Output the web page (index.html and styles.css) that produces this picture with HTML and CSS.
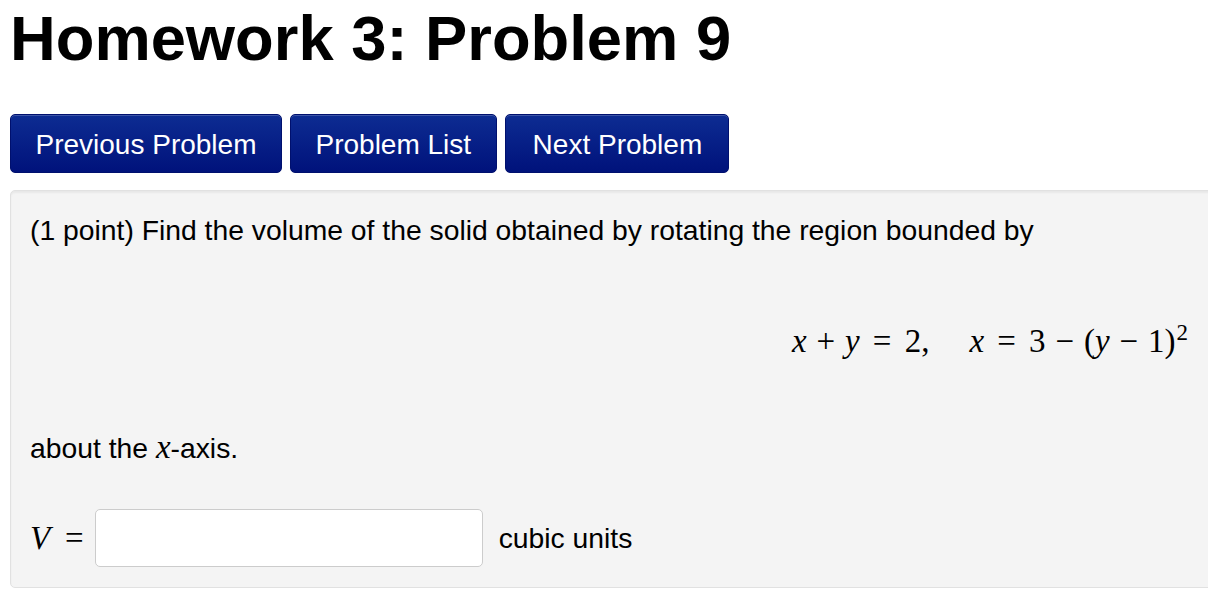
FILE: index.html
```html
<!DOCTYPE html>
<html>
<head>
<meta charset="utf-8">
<link rel="stylesheet" href="styles.css">
</head>
<body>
<div class="page">
  <h1 class="title">Homework 3: Problem 9</h1>
  <div class="nav">
    <a class="btn">Previous Problem</a>
    <a class="btn">Problem List</a>
    <a class="btn btn-wide">Next Problem</a>
  </div>
  <div class="well">
    <p class="line">(1 point) Find the volume of the solid obtained by rotating the region bounded by</p>
    <div class="display">
      <span class="math"><i>x</i><span class="bin">+</span><i>y</i><span class="rel">=</span>2,</span>
      <span class="math"><i>x</i><span class="rel">=</span>3<span class="bin">−</span>(<i>y</i><span class="bin">−</span>1)<sup>2</sup></span>
    </div>
    <p class="line">about the <i class="mi">x</i>-axis.</p>
    <div class="answer">
      <span class="math"><i>V</i><span class="rel last">=</span></span>
      <input class="box" type="text">
      <span>cubic units</span>
    </div>
  </div>
</div>
</body>
</html>
```
FILE: styles.css
```css
html, body {
  margin: 0;
  padding: 0;
  background: #fff;
  overflow: hidden;
}
body {
  font-family: "Liberation Sans", Arial, sans-serif;
  color: #000;
}
.page {
  padding: 0 10px;
  width: 1960px;
}
.title {
  margin: 3px 0 0;
  font-size: 63.3px;
  line-height: 70px;
  font-weight: bold;
}
.nav {
  display: flex;
  gap: 8px;
  margin-top: 41px;
}
.btn {
  display: flex;
  align-items: center;
  height: 59px;
  box-sizing: border-box;
  padding: 3px 24.5px 0;
  font-size: 28px;
  color: #fff;
  border-radius: 5px;
  border: 1px solid #00106e;
  background: linear-gradient(#0d2c92, #00127b);
  box-shadow: inset 0 1px 0 rgba(255,255,255,0.2);
}
.btn-wide {
  padding: 3px 26px 0 27px;
}
.well {
  margin-top: 17px;
  background: #f4f4f4;
  border: 1px solid #e1e1e1;
  border-radius: 5px;
  box-shadow: inset 0 2px 2px rgba(0,0,0,0.05);
  padding: 20px 19px 20px;
  font-size: 28.3px;
  line-height: 38px;
}
.line {
  margin: 0;
}
.math {
  font-family: "Liberation Serif", "Times New Roman", serif;
  font-size: 33px;
}
.mi {
  font-family: "Liberation Serif", "Times New Roman", serif;
  font-size: 33px;
}
.bin {
  margin: 0 0.3em;
}
.rel {
  margin: 0 0.4em;
}
.rel.last {
  margin-left: 0.45em;
  margin-right: 0;
}
.math sup {
  font-size: 23px;
  line-height: 0;
  margin-left: 1px;
}
.display {
  display: flex;
  justify-content: center;
  gap: 40px;
  margin: 73px 0 68px;
}
.answer {
  display: flex;
  align-items: center;
  gap: 11px;
  margin-top: 42px;
}
.box {
  width: 388px;
  height: 58px;
  box-sizing: border-box;
  border: 1px solid #cccccc;
  border-radius: 5px;
  background: #fff;
  margin: 0 5px 0 0;
}
```
